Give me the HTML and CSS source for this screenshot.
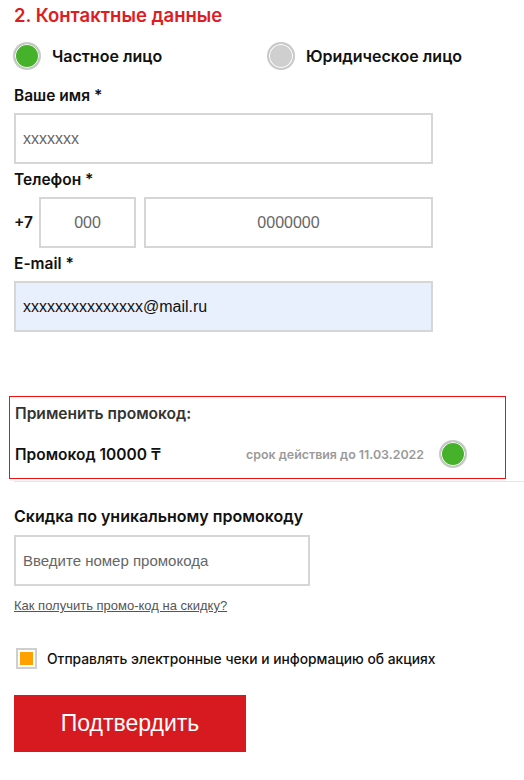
FILE: index.html
```html
<!DOCTYPE html>
<html lang="ru">
<head>
    <meta charset="UTF-8">
    <meta name="viewport" content="width=device-width, initial-scale=1.0">
    <title>Контактные данные</title>
    <link rel="stylesheet" href="styles.css">
</head>
<body>
    <div class="form">
        <h2 class="title">2. Контактные данные</h2>

        <div class="person-type">
            <label class="radio"><span class="dot dot-on"></span>Частное лицо</label>
            <label class="radio"><span class="dot"></span>Юридическое лицо</label>
        </div>

        <label class="field-label first">Ваше имя *</label>
        <input class="input input-wide" type="text" placeholder="xxxxxxx">

        <label class="field-label">Телефон *</label>
        <div class="phone">
            <span class="phone-code">+7</span>
            <input class="input input-center input-area" type="text" placeholder="000">
            <input class="input input-center input-number" type="text" placeholder="0000000">
        </div>

        <label class="field-label">E-mail *</label>
        <input class="input input-wide input-filled" type="text" value="xxxxxxxxxxxxxxx@mail.ru">

        <div class="promo-box">
            <div class="promo-title">Применить промокод:</div>
            <div class="promo-row">
                <span class="promo-name">Промокод 10000 ₸</span>
                <span class="promo-date">срок действия до 11.03.2022</span>
                <span class="dot dot-on"></span>
            </div>
        </div>
        <div class="divider"></div>

        <h3 class="subtitle">Скидка по уникальному промокоду</h3>
        <input class="input input-promo" type="text" placeholder="Введите номер промокода">
        <a class="help-link" href="#">Как получить промо-код на скидку?</a>

        <label class="check">
            <span class="check-box"><span class="check-fill"></span></span>
            Отправлять электронные чеки и информацию об акциях
        </label>

        <button class="submit">Подтвердить</button>
    </div>
</body>
</html>
```

FILE: styles.css
```css
body {
    margin: 0;
    background: #fff;
    color: #111;
    font-family: Inter, "Noto Sans", sans-serif;
}
.form {
    padding: 3px 0 0 14px;
}
.title {
    margin: 0;
    font-size: 18.5px;
    line-height: 24px;
    font-weight: 600;
    color: #e01b22;
}
.person-type {
    display: flex;
    margin-top: 15px;
    height: 28px;
}
.radio {
    display: flex;
    align-items: center;
    gap: 11px;
    width: 255px;
    margin-left: -1px;
    font-size: 16px;
    font-weight: 600;
}
.dot {
    display: inline-block;
    box-sizing: border-box;
    width: 28px;
    height: 28px;
    border-radius: 50%;
    border: 2px solid #c9c9c9;
    background: #cfcfcf;
    box-shadow: inset 0 0 0 1px #fff;
    flex-shrink: 0;
}
.dot-on {
    background: #46b12a;
}
.field-label {
    display: block;
    margin: 7px 0 8px;
    font-size: 15.5px;
    line-height: 18px;
    font-weight: 600;
}
.field-label.first {
    margin-top: 17px;
}
.input {
    display: block;
    box-sizing: border-box;
    height: 51px;
    border: 2px solid #d6d6d6;
    padding: 0 7px;
    font-family: "Liberation Sans", Arial, sans-serif;
    font-size: 16px;
    color: #111;
    background: #fff;
    outline: none;
}
.input::placeholder {
    color: #666;
}
.input-wide {
    width: 419px;
}
.input-filled {
    background: #e8f0fe;
}
.phone {
    display: flex;
    align-items: center;
}
.phone-code {
    width: 25px;
    font-size: 15.5px;
    font-weight: 600;
}
.input-center {
    text-align: center;
}
.input-area {
    width: 97px;
    margin-right: 8px;
}
.input-number {
    width: 289px;
}
.promo-box {
    margin: 64px 0 0 -5px;
    width: 497px;
    height: 83px;
    box-sizing: border-box;
    border: 1px solid #f01010;
    padding: 7px 0 0 5px;
}
.promo-title {
    font-size: 15.6px;
    font-weight: 600;
    line-height: 20px;
    color: #333;
}
.promo-row {
    display: flex;
    align-items: center;
    margin-top: 16px;
}
.promo-name {
    font-size: 15.5px;
    font-weight: 600;
}
.promo-date {
    margin-left: auto;
    margin-right: 15px;
    font-size: 12.4px;
    font-weight: 600;
    color: #9a9a9a;
}
.promo-row .dot {
    margin-right: 38px;
}
.divider {
    height: 1px;
    margin-top: 2px;
    background: #e6e6e6;
}
.subtitle {
    margin: 24px 0 0;
    font-size: 16px;
    line-height: 20px;
    font-weight: 600;
}
.input-promo {
    width: 296px;
    margin-top: 9px;
    font-size: 15px;
}
.help-link {
    display: block;
    margin-top: 12px;
    font-family: "Liberation Sans", Arial, sans-serif;
    font-size: 13px;
    color: #555;
}
.check {
    display: flex;
    align-items: center;
    gap: 10px;
    margin: 35px 0 0 2px;
    font-size: 13.8px;
    font-weight: 500;
}
.check-box {
    box-sizing: border-box;
    width: 21px;
    height: 21px;
    border: 2px solid #cfcfcf;
    padding: 2px;
    background: #fff;
}
.check-fill {
    display: block;
    width: 100%;
    height: 100%;
    background: #ffa200;
}
.submit {
    display: block;
    margin-top: 26px;
    width: 232px;
    height: 57px;
    border: none;
    background: #d71920;
    color: #fff;
    font-family: "Liberation Sans", Arial, sans-serif;
    font-size: 23px;
    cursor: pointer;
}
```
